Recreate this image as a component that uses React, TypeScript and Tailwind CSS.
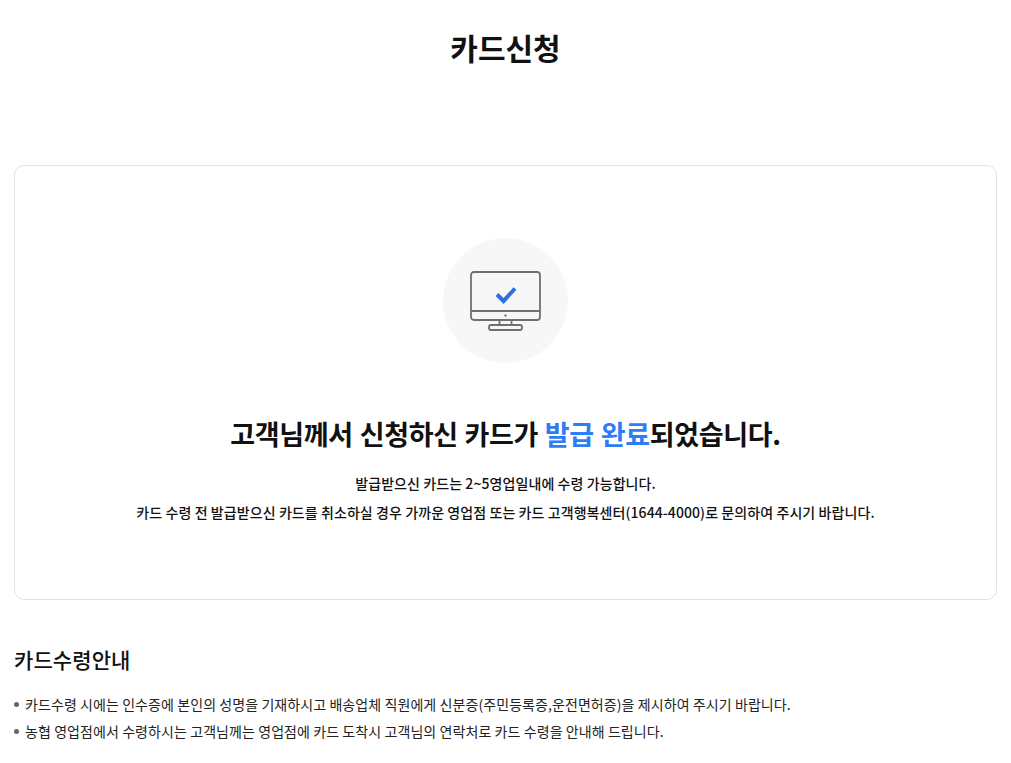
export default function App() {
  return (
    <div className="h-[763px] overflow-hidden bg-white text-[#111] font-['Noto_Sans_CJK_KR','Noto_Sans',sans-serif]">
      <div className="w-[983px] ml-[14px]">
        <h1 className="pt-[24px] h-[165px] text-center text-[30px] leading-[46px] font-bold">카드신청</h1>
        <div className="h-[435px] border border-[#e2e2e2] rounded-[10px] flex flex-col items-center pt-[72px]">
          <div className="w-[125px] h-[125px] rounded-full bg-[#f7f7f7] flex items-center justify-center">
            <svg width="72" height="60" viewBox="0 0 72 60" fill="none" className="mt-[1px]">
              <rect x="1" y="1" width="69" height="48" rx="3" stroke="#707070" strokeWidth="1.8" />
              <path d="M1 40H70" stroke="#707070" strokeWidth="1.8" />
              <circle cx="35.500" cy="44.500" r="1.100" fill="#555" />
              <path d="M29.500 49V54M41.500 49V54" stroke="#707070" strokeWidth="1.8" />
              <rect x="19" y="54" width="33" height="5" rx="2" stroke="#707070" strokeWidth="1.8" />
              <path d="M27 23.500L33.500 30L45 17.500" stroke="#2f6fe0" strokeWidth="4" />
            </svg>
          </div>
          <p className="mt-[49px] text-[27px] leading-[44px] font-bold tracking-[-0.33px] [word-spacing:1px]">
            고객님께서 신청하신 카드가 <span className="text-[#2f7df6]">발급 완료</span>되었습니다.
          </p>
          <p className="mt-[13px] text-[14px] leading-[29px] font-medium text-center tracking-[0.08px]">
            발급받으신 카드는 2~5영업일내에 수령 가능합니다.
            <br />
            카드 수령 전 발급받으신 카드를 취소하실 경우 가까운 영업점 또는 카드 고객행복센터(1644-4000)로 문의하여 주시기 바랍니다.
          </p>
        </div>
        <h2 className="mt-[43px] text-[21px] leading-[32px] font-medium tracking-[0.1px]">카드수령안내</h2>
        <ul className="mt-[16px] text-[14px] leading-[27px] text-[#222] tracking-[0.08px]">
          <li className="flex items-center gap-[6px]">
            <span className="w-[5px] h-[5px] rounded-full bg-[#666]" />
            카드수령 시에는 인수증에 본인의 성명을 기재하시고 배송업체 직원에게 신분증(주민등록증,운전면허증)을 제시하여 주시기 바랍니다.
          </li>
          <li className="flex items-center gap-[6px]">
            <span className="w-[5px] h-[5px] rounded-full bg-[#666]" />
            농협 영업점에서 수령하시는 고객님께는 영업점에 카드 도착시 고객님의 연락처로 카드 수령을 안내해 드립니다.
          </li>
        </ul>
      </div>
    </div>
  );
}
